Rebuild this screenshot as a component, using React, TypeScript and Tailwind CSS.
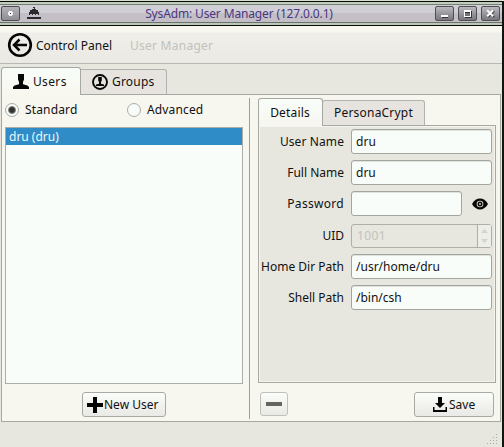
import React from 'react';

const field =
  'box-border h-[25px] rounded-[3px] border border-[#a3a59f] bg-[#f8fdf9] pl-[4px] flex items-center shadow-[inset_0_1px_0_#dfe3de]';
const button =
  'box-border flex items-center rounded-[3px] border bg-linear-to-b from-[#fafdf9] to-[#e9e9e6]';
const titleButton =
  'box-border flex h-[15px] w-[19px] items-center justify-center rounded-[2px] border border-[#4e4f55] bg-linear-to-b from-[#b9b9be] to-[#77777d]';

function TitleBar() {
  return (
    <header className="flex h-[26px] shrink-0 flex-col">
      <div className="h-px bg-[#d9ddcf]" />
      <div className="h-px bg-[#050a05]" />
      <div className="h-[2px] bg-[#c3cdbd]" />
      <div className="h-px bg-[#767c78]" />
      <div className="grid h-[17px] grid-cols-[1fr_auto_1fr] items-center bg-linear-to-b from-[#d0cfd6] from-50% to-[#c4bfc6] to-50%">
        <div className="flex items-center pl-px">
          <div className="box-border flex h-[15px] w-[19px] items-center justify-center rounded-[2px] border border-[#4e4f55] bg-linear-to-b from-[#b4b3b7] to-[#8f8e92]">
            <svg width="7" height="7" viewBox="0 0 7 7" shapeRendering="crispEdges">
              <path d="M2 1h3v1h1v3H5v1H2V5H1V2h1z" fill="#f4f4f4" />
              <path d="M3 3h1v1H3z" fill="#333" />
            </svg>
          </div>
          <svg className="ml-[7px] -translate-y-px" width="14" height="12" viewBox="0 0 14 12" fill="#292b2b" shapeRendering="crispEdges">
            <path d="M6 0h2v1H6zM7 1h1v1H7zM5 2h4v1H5zM3 3h8v2H3zM2 5h10v2H2zM2 7h1v1H2zM5 7h1v1H5zM8 7h1v1H8zM11 7h1v1h-1z" />
            <path d="M0 10h14v2H0z" />
          </svg>
        </div>
        <div className="-translate-x-[12px] whitespace-pre text-[12px] leading-[17px] tracking-[-0.150px] text-[#493781]">SysAdm: User Manager (127.0.0.1)</div>
        <div className="flex justify-end gap-[4px] pr-[2px]">
          <div className={titleButton}>
            <svg width="9" height="9" viewBox="0 0 9 9" shapeRendering="crispEdges"><path d="M2 7h6v2H2z" fill="#333" /><path d="M1 6h7v2H1z" fill="#fff" /></svg>
          </div>
          <div className={titleButton}>
            <svg width="9" height="9" viewBox="0 0 9 9" shapeRendering="crispEdges"><path d="M2 2h7v7H2z" fill="#333" /><path d="M1 1h7v7H1z" fill="#fff" /><path d="M2 3h5v4H2z" fill="#707077" /><path d="M2 3h5v1H2z" fill="#333" /></svg>
          </div>
          <div className={titleButton}>
            <svg width="9" height="9" viewBox="0 0 9 9"><path d="M2 2l6 6M8 2L2 8" stroke="#333" strokeWidth="2" /><path d="M1.200 1.200l6 6M7.200 1.200l-6 6" stroke="#fff" strokeWidth="2" /></svg>
          </div>
        </div>
      </div>
      <div className="h-px bg-[#6c716d]" />
      <div className="h-[2px] bg-[#bcc8b7]" />
      <div className="h-px bg-[#070a07]" />
    </header>
  );
}

function Toolbar() {
  return (
    <nav className="flex h-[38px] shrink-0 items-center border-b border-[#b8b9b3] bg-linear-to-b from-[#f8f7ef] from-15% via-[#efeee8] via-20% to-[#ebe9e4] pl-[7px]">
      <svg width="26" height="26" viewBox="0 0 26 26" fill="none" stroke="#050505">
        <circle cx="13" cy="13" r="10.800" strokeWidth="2.600" />
        <path d="M7 13h13M12.500 7.500L7 13l5.500 5.500" strokeWidth="2.500" />
      </svg>
      <span className="ml-[3px] w-[94px] pt-[2px]">Control Panel</span>
      <span className="pt-[2px] tracking-[0.250px] text-[#c1c2bd]">User Manager</span>
    </nav>
  );
}

const UserIcon = () => (
  <svg width="16" height="15" viewBox="0 0 16 15" fill="#080808">
    <path d="M5 0h6v5.500L10 8v2.200L14.500 11.500 16 13v2H0v-2l1.500-1.500L6 10.200V8L5 5.500z" />
  </svg>
);

const GroupIcon = () => (
  <svg width="16" height="16" viewBox="0 0 16 16">
    <circle cx="8" cy="8" r="7" fill="none" stroke="#080808" strokeWidth="1.900" />
    <path d="M6.200 3h3.600v3.500L9 8v1.700l3 .8V12H4v-1.500l3-.8V8l-.8-1.500z" fill="#080808" />
  </svg>
);

function Radio({ label, on }: { label: string; on?: boolean }) {
  return (
    <label className="flex items-center gap-[6px]">
      <span className="box-border flex h-[14px] w-[14px] items-center justify-center rounded-full border border-[#a9aca7] bg-[#f7fcf8]">
        {on && <span className="h-[8px] w-[8px] rounded-full border border-[#858883] bg-[#30332f]" />}
      </span>
      <span className="pt-px tracking-[0.150px]">{label}</span>
    </label>
  );
}

function UserList() {
  return (
    <section className="flex w-[247px] flex-col pl-[3px]">
      <div className="flex h-[32px] items-start pt-[7px] leading-[14px]">
        <div className="w-[122px]"><Radio label="Standard" on /></div>
        <Radio label="Advanced" />
      </div>
      <div className="box-border h-[257px] w-[238px] border border-[#abada8] bg-[#f8fdf9]">
        <div className="h-[17px] bg-[#308cc6] pl-[3px] leading-[17px] text-[#eef8fc]">dru (dru)</div>
      </div>
      <div className={`${button} mt-[8px] ml-[77px] h-[25px] w-[84px] border-[#a9aaa3] pl-[4px]`}>
        <svg width="16" height="16" viewBox="0 0 16 16" shapeRendering="crispEdges"><path d="M6 0h4v6h6v4h-6v6H6v-6H0V6h6z" fill="#050505" /></svg>
        <span className="ml-px whitespace-nowrap">New User</span>
      </div>
    </section>
  );
}

function Row({ label, children, className = '' }: { label: string; children: React.ReactNode; className?: string }) {
  return (
    <div className={`flex h-[25px] items-center ${className}`}>
      <span className="mr-[7px] w-[83px] whitespace-nowrap text-right">{label}</span>
      {children}
    </div>
  );
}

function Details() {
  return (
    <section className="flex flex-col pl-[8px]">
      <div className="flex h-[30px] items-end">
        <div className="z-10 box-border flex h-[28px] w-[65px] items-center justify-center rounded-t-[3px] border border-b-0 border-[#a6a8a2] bg-linear-to-b from-[#f8fdf9] to-[#f7f6f0] -mb-px pr-px tracking-[0.150px]">Details</div>
        <div className="-ml-px box-border flex h-[25px] w-[103px] items-center justify-center rounded-t-[3px] border border-b-0 border-[#b2b3ae] bg-[#e7e3df] tracking-[0.200px]">PersonaCrypt</div>
      </div>
      <div className="box-border h-[258px] w-[238px] border border-[#a6a8a2] bg-[#f5f5ed] p-px">
        <div className="flex h-full flex-col bg-[#e8e7df] pl-px pt-[2px]">
          <Row label="User Name" className="tracking-[0.100px]"><div className={`${field} w-[141px]`}>dru</div></Row>
          <Row label="Full Name" className="mt-[6px]"><div className={`${field} w-[141px]`}>dru</div></Row>
          <Row label="Password" className="mt-[6px] tracking-[0.300px]">
            <div className={`${field} w-[111px]`} />
            <svg className="ml-[10px]" width="16" height="12" viewBox="0 0 16 12">
              <path d="M0 6C4-1.300 12-1.300 16 6C12 13.300 4 13.300 0 6" fill="#080808" />
              <circle cx="8" cy="6" r="3.300" fill="#e8e7df" /><circle cx="8" cy="6" r="2.500" fill="#080808" /><circle cx="8" cy="6" r=".9" fill="#e8e7df" />
            </svg>
          </Row>
          <Row label="UID" className="mt-[7px]">
            <div className="box-border flex h-[24px] w-[141px] items-center rounded-[3px] border border-[#adafa9] bg-[#e8e7df] pl-[5px] text-[#c2c3be]">
              <span className="flex-1 tracking-[0.400px]">1001</span>
              <span className="flex h-full w-[14px] items-center justify-center border-l border-[#adafa9] bg-[#eeeee9]">
                <svg width="7" height="14" viewBox="0 0 7 14" fill="#d2d3ce"><path d="M0 4L3.500 0L7 4zM0 10h7l-3.500 4z" /></svg>
              </span>
            </div>
          </Row>
          <Row label="Home Dir Path" className="mt-[6px]"><div className={`${field} w-[141px]`}>/usr/home/dru</div></Row>
          <Row label="Shell Path" className="mt-[6px]"><div className={`${field} w-[141px]`}>/bin/csh</div></Row>
        </div>
      </div>
      <div className="mt-[9px] flex w-[236px] justify-between pl-[2px]">
        <div className={`${button} h-[24px] w-[28px] justify-center border-[#bfc0ba]`}><span className="h-[4px] w-[16px] bg-[#66645e]" /></div>
        <div className={`${button} h-[25px] w-[80px] border-[#a9aaa3] pl-[18px]`}>
          <svg width="14" height="15" viewBox="0 0 14 15" fill="#050505"><path d="M5 0h4v6h3L7 11 2 6h3zM0 10h1.500v3h11v-3H14v5H0z" /></svg>
          <span className="ml-[2px]">Save</span>
        </div>
      </div>
    </section>
  );
}

export default function App() {
  return (
    <div className="flex h-[447px] w-[504px] overflow-hidden bg-[#e8e7df] font-['Noto_Sans',sans-serif] text-[12px] text-[#111]">
      <div className="flex w-[502px] shrink-0 flex-col">
        <TitleBar />
        <Toolbar />
        <main className="flex flex-col px-px">
          <div className="flex h-[30px] items-end">
            <div className="z-10 -mb-px box-border flex h-[28px] w-[80px] items-center gap-[4px] rounded-t-[3px] border border-b-0 border-[#a6a8a2] bg-linear-to-b from-[#f8fdf9] to-[#f8f7ef] pl-[11px]"><UserIcon /><span className="tracking-[0.350px]">Users</span></div>
            <div className="box-border flex h-[25px] w-[86px] items-center gap-[4px] rounded-tr-[3px] border border-b-0 border-l-0 border-[#b2b3ae] bg-[#e7e4df] pl-[11px]"><GroupIcon /><span className="tracking-[0.200px]">Groups</span></div>
          </div>
          <div className="box-border flex h-[328px] w-[500px] border border-[#a6a8a2] bg-[#f8f7ef]">
            <UserList />
            <div className="mt-[3px] h-[321px] w-px bg-[#9da09a]" />
            <Details />
          </div>
        </main>
        <footer className="flex flex-1 items-end justify-end pr-[4px] pb-[2px]">
          <svg width="11" height="11" viewBox="0 0 11 11" fill="#aaaba5" shapeRendering="crispEdges">
            <path d="M9 0h1v1H9zM6 3h1v1H6zM9 3h1v1H9zM3 6h1v1H3zM6 6h1v1H6zM9 6h1v1H9zM0 9h1v1H0zM3 9h1v1H3zM6 9h1v1H6zM9 9h1v1H9z" />
          </svg>
        </footer>
      </div>
      <div className="mt-px w-[2px] bg-[#101510]" />
    </div>
  );
}
